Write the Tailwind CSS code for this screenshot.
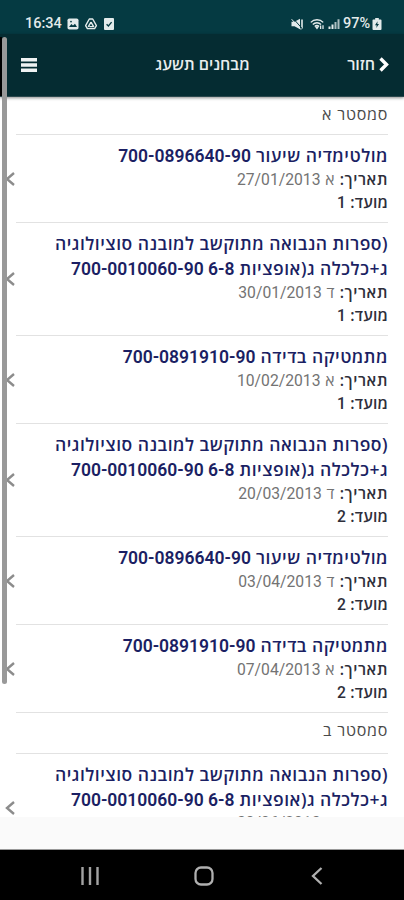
<!DOCTYPE html>
<html lang="he">
<head>
  <meta charset="utf-8">
  <meta name="viewport" content="width=device-width, initial-scale=1.0">
  <title>מבחנים תשעג</title>
  <script src="https://cdn.jsdelivr.net/npm/@tailwindcss/browser@4"></script>
</head>

<body class="bg-white font-[Roboto,'Open_Sans',sans-serif]">
  <div class="relative w-[404px] h-[900px] overflow-hidden flex flex-col">
    <!-- Status bar -->
    <div class="h-[34px] shrink-0 bg-[#053a42] text-[#e3ebeb] flex items-end justify-between pl-[25px] pr-[22px]">
      <div class="flex items-center gap-[6px] h-5">
        <span class="text-[14.5px] font-medium leading-5 w-[36px] whitespace-nowrap">16:34</span>
        <svg class="w-3 h-3" viewBox="0 0 12 12"><rect x="0.5" y="0.5" width="11" height="11" rx="1.8" fill="currentColor"/><path d="M2 9l2.4-3 1.6 1.6L8 5.8 10 9z" fill="#053a42"/><circle cx="4" cy="3.6" r="0.9" fill="#053a42"/></svg>
        <svg class="w-[12px] h-3" viewBox="0 0 12 12" fill="none" stroke="currentColor" stroke-width="1.4" stroke-linejoin="round"><path d="M4.3 1h3.4l3.7 6.6-1.8 3H2.4l-1.8-3z"/><path d="M6 4.2L3.2 8.8M6 4.2l2.6 4.4H4.4"/></svg>
        <svg class="w-3 h-3" viewBox="0 0 12 12"><rect x="1" y="0" width="10" height="12" rx="1" fill="currentColor"/><path d="M3.6 6.2l1.8 1.8 3.2-3.8" fill="none" stroke="#053a42" stroke-width="1.3"/></svg>
      </div>
      <div class="flex items-center h-5">
        <svg class="w-3 h-3 mr-[7px]" viewBox="0 0 12 12" fill="currentColor"><path d="M0.5 3.8h3L9 0.8v10.4L3.5 8.2h-3z"/><path d="M11 1.5v9" stroke="currentColor" stroke-width="1.6"/><path d="M2.2 0.5l8.5 9.5" stroke="#053a42" stroke-width="1"/><path d="M0.6 1.2l9.4 10.4" stroke="currentColor" stroke-width="1"/></svg>
        <svg class="w-[15px] h-3 mr-[3px]" viewBox="0 0 15 12" fill="none" stroke="currentColor" stroke-width="1.4"><path d="M0.8 4.4C4 0.9 10 0.9 13.2 4.4M2.8 6.4c2.3-2.3 6-2.3 8.2 0M4.8 8.4c1.2-1.2 3-1.2 4.2 0"/><path d="M6 9l1 1.4L8 9zM10.6 11V7.4M13 7.2v3.8" stroke-width="1.3"/></svg>
        <svg class="w-[12px] h-3 mr-[3px]" viewBox="0 0 12 12" fill="currentColor"><path d="M0.5 8.6h2v2.4h-2zM3.5 6.6h2V11h-2z"/><path d="M6.5 4h2v7h-2zM9.5 1.3h2V11h-2z" opacity=".75"/></svg>
        <span class="text-[14.5px] font-medium leading-5 w-[29px] whitespace-nowrap">97%</span>
        <svg class="w-[10px] h-3" viewBox="0 0 10 12"><path d="M3.2 0h3.6v1.4H8.6a.9.9 0 0 1 .9.9v8.8a.9.9 0 0 1-.9.9H1.4a.9.9 0 0 1-.9-.9V2.3a.9.9 0 0 1 .9-.9h1.8z" fill="currentColor"/><path d="M5.6 3.2L3 7.3h1.7L4.3 10 7 6H5.3z" fill="#053a42"/></svg>
      </div>
    </div>

    <!-- App header -->
    <header class="relative z-10 h-[63px] shrink-0 bg-[#052c32] border-b border-[#2b484d] shadow-[0_1px_3px_rgba(0,0,0,0.45)] text-[#e9eeee] grid grid-cols-3 items-center pl-[21px] pr-[15px]">
      <svg class="w-4 h-[14px]" viewBox="0 0 16 14" fill="#f0f3f3"><path d="M0 0h16v3.5H0zM0 5.2h16v3.5H0zM0 10.4h16v3.5H0z"/></svg>
      <h1 class="text-[16px] font-semibold text-center whitespace-nowrap -ml-[5px]" dir="rtl">מבחנים תשעג</h1>
      <div class="flex items-center justify-end gap-[4px] -mt-[2px]">
        <span class="text-[16px] font-semibold mt-[2px]" dir="rtl">חזור</span>
        <svg class="w-[10px] h-[15px]" viewBox="0 0 10 15" fill="none" stroke="#fff" stroke-width="3.4"><path d="M1.5 1.5l6 6-6 6"/></svg>
      </div>
    </header>

    <!-- Exam list -->
    <main id="list" class="relative h-[720px] shrink-0 overflow-hidden font-['Open_Sans',sans-serif]" dir="rtl"></main>

    <div class="h-[33px] shrink-0 bg-[#fafafa] border-b border-[#999]"></div>

    <!-- System navigation -->
    <nav class="h-[50px] shrink-0 bg-black flex items-center justify-between pl-[81px] pr-[81px]">
      <svg class="w-[18px] h-[18px] mt-[2px]" viewBox="0 0 18 18" stroke="#a3a3a3" stroke-width="2.4"><path d="M1.5 0v18M9 0v18M16.5 0v18"/></svg>
      <svg class="w-5 h-5 -ml-[3px] mt-[2px]" viewBox="0 0 20 20" fill="none" stroke="#b0b0b0" stroke-width="2.3"><rect x="1.5" y="1.5" width="17" height="17" rx="5.5"/></svg>
      <svg class="w-[12px] h-[18px] mt-[2px]" viewBox="0 0 12 18" fill="none" stroke="#b0b0b0" stroke-width="2.3"><path d="M10.5 1L2 9l8.5 8"/></svg>
    </nav>

    <!-- Scroll position -->
    <div class="absolute z-20 left-0 top-[37px] w-[2px] h-[59px] bg-black"></div>
    <div class="absolute z-20 left-[2px] top-[37px] w-[5px] h-[647px] rounded-full bg-[#999]"></div>
  </div>

  <script>
    const multimedia = ['מולטימדיה שיעור 700-0896640-90'];
    const math = ['מתמטיקה בדידה 700-0891910-90'];
    const literature = ['(ספרות הנבואה מתוקשב למובנה סוציולוגיה', 'ג+כלכלה ג(אופציות 6-8 700-0010060-90'];

    const semesters = [
      {
        name: 'סמסטר א',
        heading: 'h-[38px]',
        row: 'pt-[8px] pb-[9px]',
        meta: 'h-[23px]',
        exams: [
          { title: multimedia, day: 'א', date: '27/01/2013', term: 1 },
          { title: literature, day: 'ד', date: '30/01/2013', term: 1 },
          { title: math, day: 'א', date: '10/02/2013', term: 1 },
          { title: literature, day: 'ד', date: '20/03/2013', term: 2 },
          { title: multimedia, day: 'ד', date: '03/04/2013', term: 2 },
          { title: math, day: 'א', date: '07/04/2013', term: 2 },
        ],
      },
      {
        name: 'סמסטר ב',
        heading: 'h-[41px]',
        row: 'pt-[8px] pb-[6px]',
        meta: 'h-[23px] -mt-[1px]',
        exams: [
          { title: literature, day: 'א', date: '30/06/2013', term: 1 },
        ],
      },
    ];

    // course codes and dates are set in Roboto, without the tracking of the Hebrew
    const digits = text => `<span class="font-[Roboto] tracking-normal">${text}</span>`;
    const titleLine = line => `<span class="block h-[25px]">${line.replace(/\d[\d -]*\d/g, digits)}</span>`;

    const examRow = (exam, s) => `
      <div class="relative mx-4 ${s.row} border-b border-[#e2e2e2]">
        <h2 class="text-[17.5px] leading-[24px] tracking-[0.5px] font-semibold text-[#1b1f63] whitespace-nowrap">${exam.title.map(titleLine).join('')}</h2>
        <p class="text-[15.7px] ${s.meta} leading-[23px] tracking-[0.6px] text-[#737373]"><span class="font-semibold text-[#2e2e3a]">תאריך:</span> ${exam.day} ${digits(exam.date)}</p>
        <p class="text-[15.7px] h-[22px] leading-[23px] tracking-[0.2px] font-semibold text-[#2e2e3a]">מועד: <span class="font-medium">${digits(exam.term)}</span></p>
        <svg class="absolute -left-[11px] top-1/2 -mt-[7px] w-[10px] h-[14px]" viewBox="0 0 10 14" fill="none" stroke="#8c8c8c" stroke-width="2.4"><path d="M9 1L2 7l7 6"/></svg>
      </div>`;

    document.getElementById('list').innerHTML = semesters.map(s => `
      <div class="mx-4 ${s.heading} pt-[5px] text-[16px] leading-[24px] tracking-[0.75px] text-[#4a4a4a] border-b border-[#e2e2e2]">${s.name}</div>
      ${s.exams.map(exam => examRow(exam, s)).join('')}`).join('');
  </script>
</body>
</html>
